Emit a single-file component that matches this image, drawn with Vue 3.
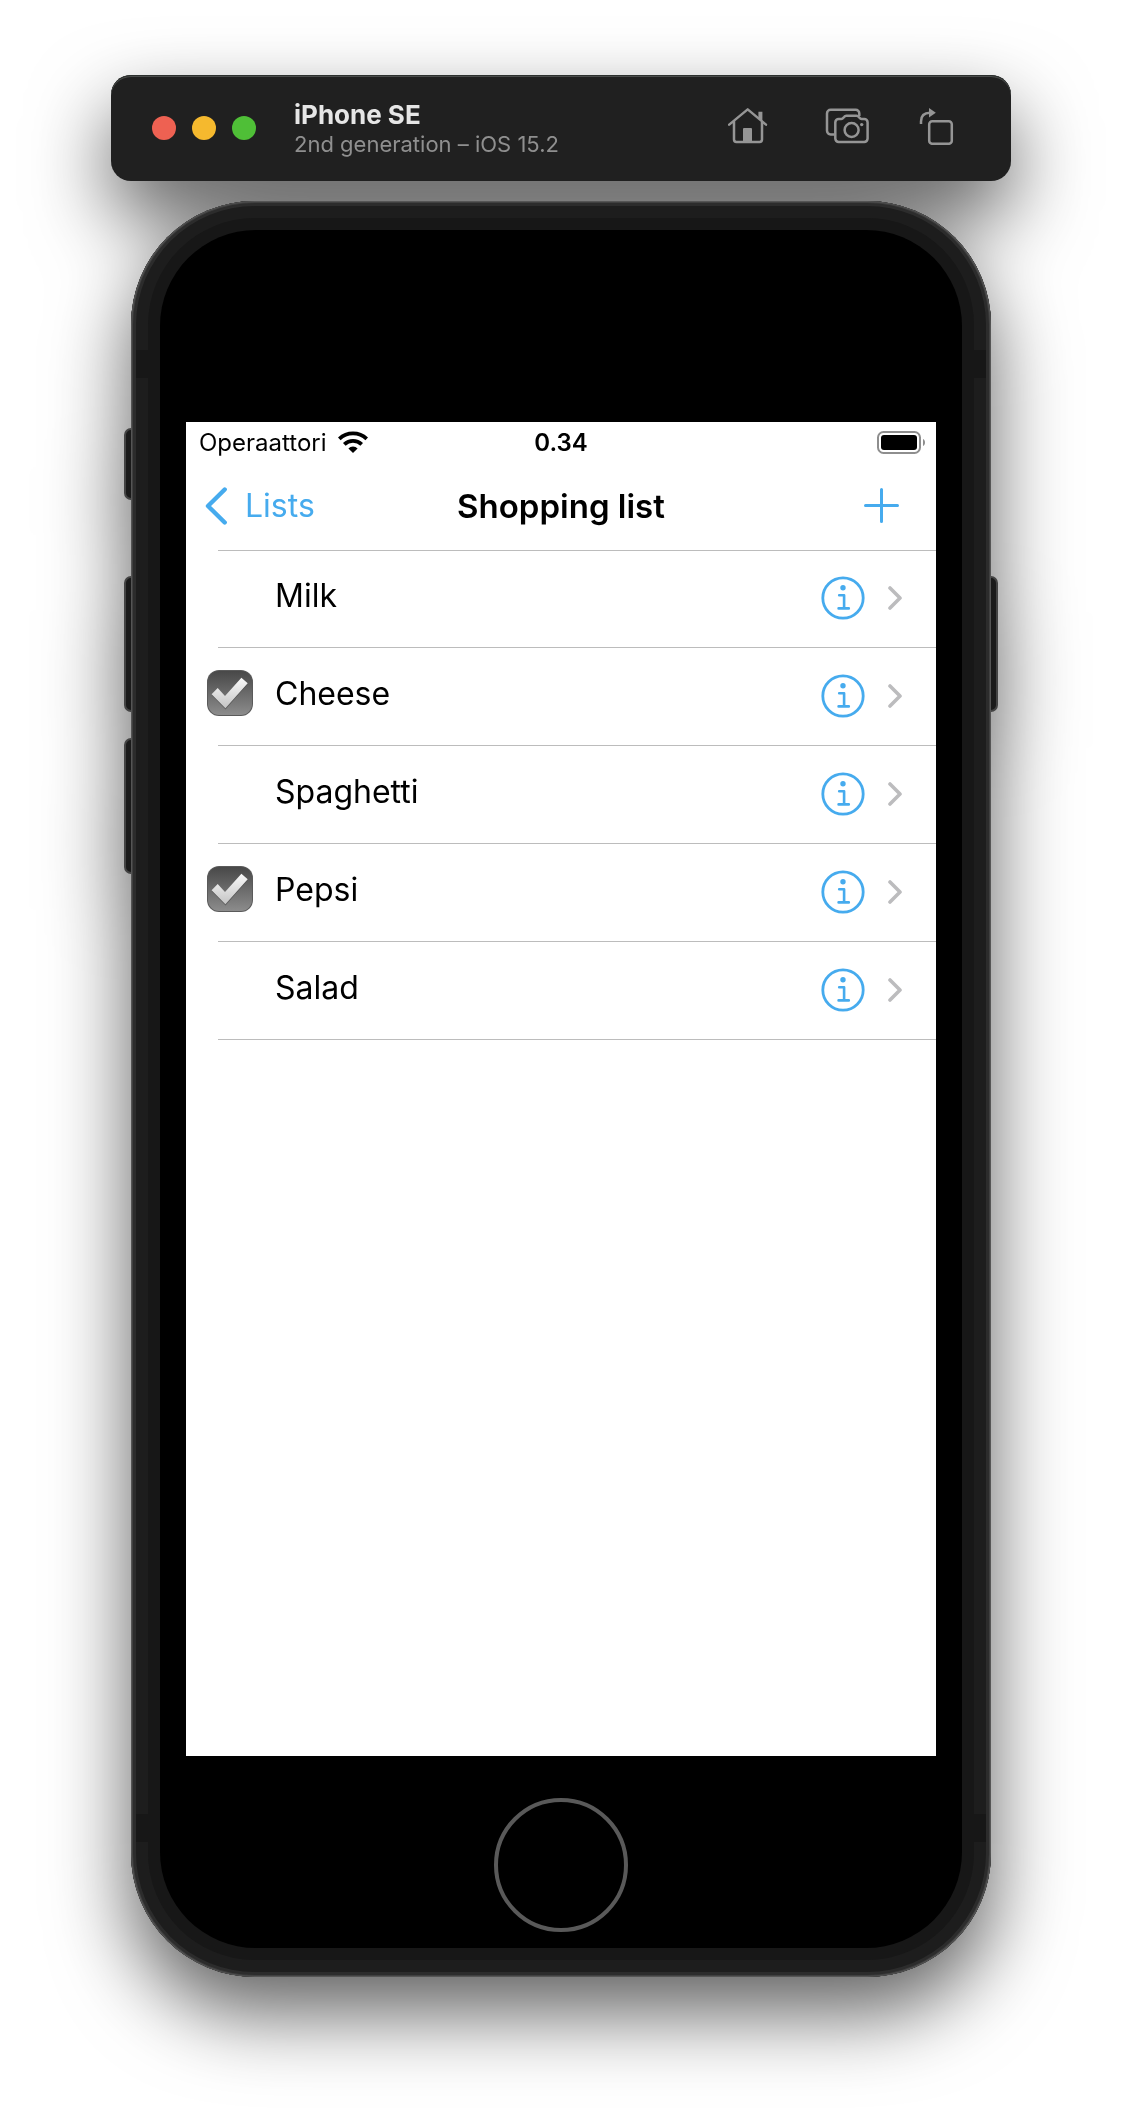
<script setup>
import { ref } from 'vue'

const items = ref([
  { id: 1, name: 'Milk', done: false },
  { id: 2, name: 'Cheese', done: true },
  { id: 3, name: 'Spaghetti', done: false },
  { id: 4, name: 'Pepsi', done: true },
  { id: 5, name: 'Salad', done: false },
])
</script>

<template>
  <main class="desktop">
    <div class="simulator">
      <header class="toolbar">
        <div class="lights">
          <button class="light close" aria-label="Close"></button>
          <button class="light minimise" aria-label="Minimise"></button>
          <button class="light zoom" aria-label="Zoom"></button>
        </div>
        <div class="device-name">
          <h1>iPhone SE</h1>
          <p>2nd generation – iOS 15.2</p>
        </div>
        <div class="tools">
          <button aria-label="Home">
            <svg width="41" height="37" viewBox="0 0 41 37" fill="none" stroke="currentColor" stroke-width="2.5" stroke-linecap="round" stroke-linejoin="round">
              <path d="M2.2 17.6 20.7 2.4l18.3 15.2M7 14.5V32.6a2.4 2.4 0 0 0 2.4 2.4h23.2a2.4 2.4 0 0 0 2.4-2.4V14.5" />
              <path d="M31.4 4.8H35.4V14.5L31.4 11z" fill="currentColor" stroke="none" />
              <path d="M16 35V22a1 1 0 0 1 1-1h7a1 1 0 0 1 1 1v13z" fill="currentColor" stroke="none" />
            </svg>
          </button>
          <button aria-label="Screenshot">
            <svg width="44" height="37" viewBox="0 0 44 37" fill="none" stroke="currentColor" stroke-width="2.5" stroke-linejoin="round">
              <path d="M9.5 27.4H5.6A3.6 3.6 0 0 1 2 23.8V6.4a3.6 3.6 0 0 1 3.6-3.6h25.1a3.6 3.6 0 0 1 3.6 3.6v2.6" />
              <path d="M13.7 12h2.6c1 0 1.5-.4 2.1-1.2l.9-1.1c.5-.7 1.1-1 2-1h10.3c.9 0 1.5.3 2 1l.9 1.1c.6.8 1.1 1.2 2.1 1.2h2.6a3.4 3.4 0 0 1 3.4 3.4v16.2a3.4 3.4 0 0 1-3.4 3.4H13.7a3.4 3.4 0 0 1-3.4-3.4V15.4A3.4 3.4 0 0 1 13.7 12z" />
              <circle cx="26.6" cy="23" r="7" />
              <circle cx="36.7" cy="17.6" r="1.7" fill="currentColor" stroke="none" />
            </svg>
          </button>
          <button aria-label="Rotate">
            <svg width="35" height="38" viewBox="0 0 35 38" fill="none" stroke="currentColor" stroke-width="2.5">
              <rect x="10.2" y="14.2" width="22.6" height="22.6" rx="3" />
              <path d="M2 17v-2.5C2 9 5 5.7 11 5.7" />
              <path d="M10 1 16.8 5.7 10 10.4z" fill="currentColor" stroke="none" />
            </svg>
          </button>
        </div>
      </header>

      <div class="phone">
        <span class="key mute"></span>
        <span class="key volume-up"></span>
        <span class="key volume-down"></span>
        <span class="key power"></span>
        <div class="case">
          <span class="band top"></span>
          <span class="band bottom"></span>
          <div class="glass">
            <section class="screen">
              <div class="status">
                <span class="carrier">
                  Operaattori
                  <svg width="30" height="22" viewBox="0 0 30 22" fill="none" stroke="#000" stroke-width="3.8">
                    <path d="M1.3 7.9a20 20 0 0 1 27.4 0" />
                    <path d="M6.3 13.4a12.7 12.7 0 0 1 17.4 0" />
                    <path d="M15 22l-4.6-4.6a6.6 6.6 0 0 1 9.2 0z" fill="#000" stroke="none" />
                  </svg>
                </span>
                <time>0.34</time>
                <svg class="battery" width="48" height="23" viewBox="0 0 48 23">
                  <rect x="1" y="1" width="42" height="21" rx="5.5" fill="none" stroke="#8e8e8e" stroke-width="2" />
                  <rect x="4" y="4" width="36" height="15" rx="3" />
                  <path d="M46 8v7c1.2-.5 2-1.9 2-3.5s-.8-3-2-3.5z" fill="#8e8e8e" />
                </svg>
              </div>

              <nav class="navbar">
                <a href="#lists" class="back">
                  <svg width="22" height="38" viewBox="0 0 22 38" fill="none" stroke="currentColor" stroke-width="4.4" stroke-linecap="round" stroke-linejoin="round">
                    <path d="M19.7 2.5 3 19l16.7 16.5" />
                  </svg>
                  Lists
                </a>
                <h2>Shopping list</h2>
                <button class="add" aria-label="Add item">
                  <svg width="35" height="35" viewBox="0 0 35 35" fill="none" stroke="currentColor" stroke-width="3" stroke-linecap="round">
                    <path d="M17.5 1.5v32M1.5 17.5h32" />
                  </svg>
                </button>
              </nav>

              <ul class="list">
                <li v-for="item in items" :key="item.id">
                  <label>
                    <span class="tick">
                      <input v-model="item.done" type="checkbox" />
                      <svg v-if="item.done" width="46" height="46" viewBox="0 0 46 46">
                        <defs>
                          <linearGradient :id="`box-${item.id}`" x2="0" y2="1">
                            <stop stop-color="#484848" />
                            <stop offset="1" stop-color="#8c8c8c" />
                          </linearGradient>
                          <linearGradient :id="`mark-${item.id}`" x2="0" y2="1">
                            <stop stop-color="#fafafa" />
                            <stop offset="1" stop-color="#c4c4c4" />
                          </linearGradient>
                        </defs>
                        <rect width="46" height="46" rx="12" fill="#5a5a5a" />
                        <rect x="1" y="1" width="44" height="44" rx="11" :fill="`url(#box-${item.id})`" />
                        <path d="M4.6 25 10.6 18.8 18 26.8 34.4 8.6 40.7 14 18.5 39.5z" fill="#3a3a3a" opacity=".5" />
                        <path d="M4.6 24.2 10.7 18 18 26 34.4 7.7 40.7 13.2 18.4 38.2z" :fill="`url(#mark-${item.id})`" />
                      </svg>
                    </span>
                    {{ item.name }}
                  </label>
                  <button class="info" :aria-label="`Details for ${item.name}`">
                    <svg width="44" height="44" viewBox="0 0 44 44" fill="none" stroke="currentColor" stroke-width="2.8" stroke-linecap="round" stroke-linejoin="round">
                      <circle cx="22" cy="22" r="20.2" />
                      <path d="M18.2 19.2h4.9v13M17.6 32.4h10.2" stroke-width="2.6" />
                      <circle cx="22" cy="11.7" r="2.7" fill="currentColor" stroke="none" />
                    </svg>
                  </button>
                  <svg class="chevron" width="14" height="24" viewBox="0 0 14 24" fill="none" stroke="#bcbcbe" stroke-width="3.6" stroke-linecap="round" stroke-linejoin="round">
                    <path d="M2 2l10 10L2 22" />
                  </svg>
                </li>
              </ul>
            </section>
            <button class="home" aria-label="Home button"></button>
          </div>
        </div>
      </div>
    </div>
  </main>
</template>

<style>
body {
  margin: 0;
  background: #fff;
}
</style>

<style scoped>
.desktop {
  padding: 75px 24px 149px;
  overflow: hidden;
  font-family: Inter, "Liberation Sans", sans-serif;
  color: #000;
}

.simulator {
  max-width: 900px;
  margin: 0 auto;
  filter: drop-shadow(0 36px 40px rgba(0, 0, 0, 0.62));
}

button {
  display: block;
  padding: 0;
  border: 0;
  background: none;
  color: inherit;
  font: inherit;
}

svg {
  display: block;
  flex: none;
}

h1,
h2,
p,
ul {
  margin: 0;
  padding: 0;
}

.toolbar {
  display: flex;
  align-items: center;
  box-sizing: border-box;
  height: 106px;
  padding: 0 57px 0 41px;
  border-radius: 20px;
  background: #202020;
  box-shadow: inset 0 1px #2c302e, inset 0 2px #4a4c4b;
}

.lights {
  display: flex;
  gap: 16px;
}

.light {
  width: 24px;
  height: 24px;
  border-radius: 50%;
}

.close {
  background: #ee6152;
}

.minimise {
  background: #f5b92e;
}

.zoom {
  background: #4fbf37;
}

.device-name {
  flex: 1;
  margin-left: 38px;
  padding-top: 2px;
}

h1 {
  font-size: 26px;
  line-height: 30px;
  font-weight: 700;
  color: #e6e6e6;
}

p {
  font-size: 22px;
  line-height: 28px;
  color: #8f8f8f;
}

.tools {
  display: flex;
  align-items: center;
  padding-bottom: 5px;
  color: #959595;
}

.tools button + button {
  margin-left: 57px;
}

.tools button:last-child {
  margin-left: 50px;
}

.phone {
  position: relative;
  isolation: isolate;
  margin: 20px 20px 0;
}

.case {
  position: relative;
  padding: 29px;
  border-radius: 124px;
  background: #171717;
  box-shadow: inset 0 0 0 1px #555, inset 0 0 0 2px #404040,
    inset 0 0 0 5px #2c2c2c, inset 0 0 0 17px #1d1d1d;
}

/* antenna bands crossing the rim on both sides */
.band {
  position: absolute;
  left: 5px;
  right: 5px;
  height: 28px;
  background: #171717;
}

.band.top {
  top: 149px;
}

.band.bottom {
  bottom: 135px;
}

.key {
  position: absolute;
  z-index: -1;
  left: -7px;
  box-sizing: border-box;
  width: 16px;
  height: 136px;
  border: 2px solid #444;
  border-radius: 7px;
  background: #1a1a1a;
}

.mute {
  top: 227px;
  height: 72px;
}

.volume-up,
.power {
  top: 375px;
}

.volume-down {
  top: 537px;
}

.power {
  left: auto;
  right: -7px;
}

.glass {
  position: relative;
  padding: 192px 26px 16px;
  border-radius: 96px;
  background: #000;
}

.screen {
  aspect-ratio: 750 / 1334;
  background: #fff;
}

.status,
.navbar {
  display: grid;
  grid-template-columns: 1fr auto 1fr;
  align-items: center;
}

.status {
  height: 40px;
  font-size: 24px;
}

.carrier {
  display: flex;
  align-items: center;
  gap: 11px;
  margin-left: 13px;
}

time {
  font-weight: 600;
}

.battery {
  justify-self: end;
  margin-right: 11px;
}

.navbar,
.list li {
  box-sizing: border-box;
  padding-bottom: 2px;
  background: linear-gradient(#bcbcbc, #bcbcbc) 32px 100% / 100% 1px no-repeat;
}

.navbar {
  height: 89px;
}

.back {
  display: flex;
  align-items: center;
  gap: 18px;
  margin-left: 19px;
  font-size: 32px;
  color: #46abee;
  text-decoration: none;
}

h2 {
  font-size: 33px;
  font-weight: 600;
}

.add {
  justify-self: end;
  margin-right: 37px;
  color: #46abee;
}

.list {
  margin-top: -1px;
  list-style: none;
}

.list li {
  display: flex;
  align-items: center;
  height: 98px;
  padding-left: 21px;
  padding-right: 34px;
}

label {
  display: flex;
  flex: 1;
  align-items: center;
  gap: 22px;
  padding-bottom: 6px;
  font-size: 32px;
}

.tick {
  display: grid;
  width: 46px;
  height: 46px;
}

.tick > * {
  grid-area: 1 / 1;
}

.tick input {
  appearance: none;
  margin: 0;
}

.info {
  margin-right: 23px;
  color: #46abee;
}

.home {
  box-sizing: border-box;
  width: 134px;
  height: 134px;
  margin: 42px auto 0;
  border: 4px solid #595959;
  border-radius: 50%;
}
</style>
